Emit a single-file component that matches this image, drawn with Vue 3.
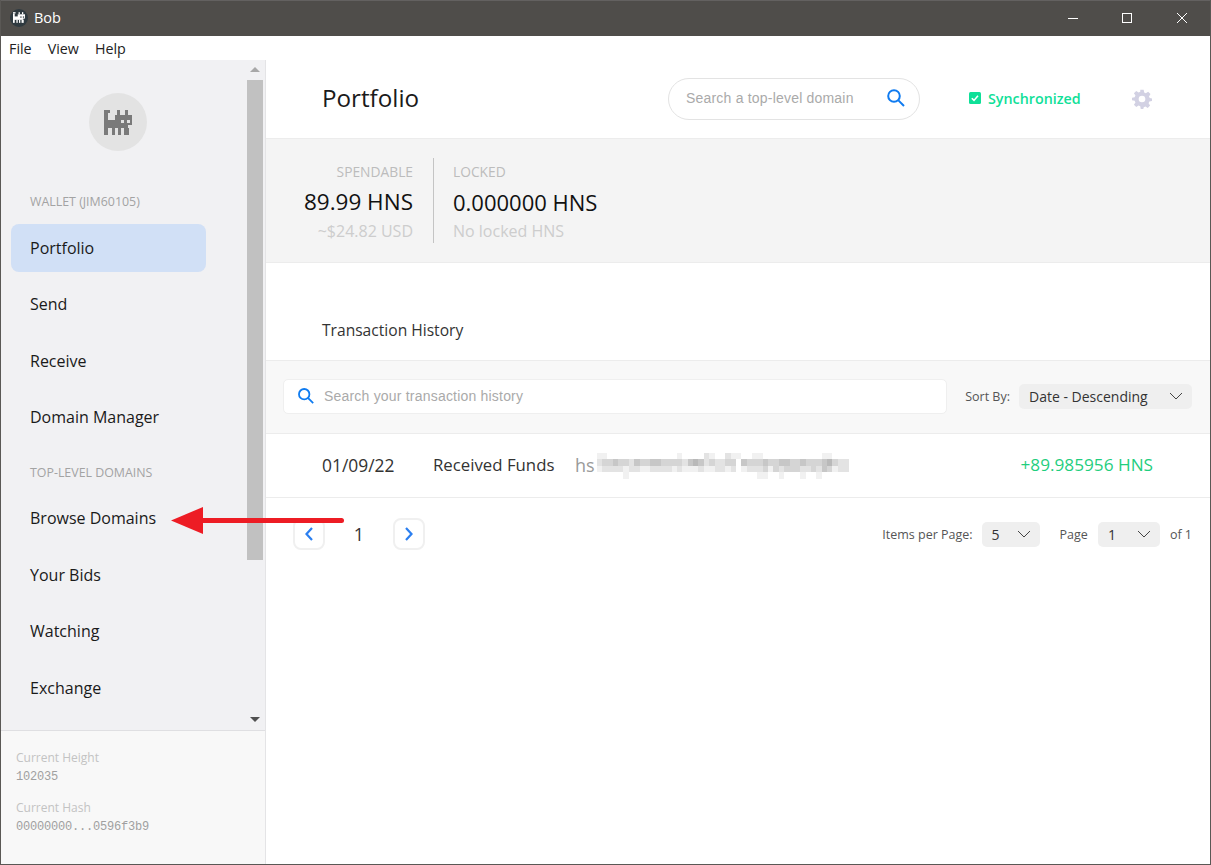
<template>
  <div class="window">
    <header class="titlebar">
      <span class="app-logo">
        <svg viewBox="0 0 28 25" width="12" height="11">
          <rect v-for="(r, i) in catRects" :key="i" :x="r[0]" :y="r[1]" :width="r[2]" :height="r[3]" fill="#fff" />
          <rect v-for="(r, i) in catEyes" :key="i" :x="r[0]" :y="r[1]" :width="r[2]" :height="r[3]" fill="#2f3a40" />
        </svg>
      </span>
      <span class="app-name">Bob</span>
      <div class="win-controls">
        <span class="win-btn">
          <svg width="12" height="12" viewBox="0 0 12 12"><path d="M1 6.500h10" stroke="#fff" fill="none" /></svg>
        </span>
        <span class="win-btn">
          <svg width="12" height="12" viewBox="0 0 12 12"><rect x="1.500" y="1.500" width="9" height="9" stroke="#fff" fill="none" /></svg>
        </span>
        <span class="win-btn">
          <svg width="12" height="12" viewBox="0 0 12 12"><path d="M1 1l10 10M11 1L1 11" stroke="#fff" fill="none" /></svg>
        </span>
      </div>
    </header>

    <nav class="menubar">
      <span>File</span>
      <span>View</span>
      <span>Help</span>
    </nav>

    <div class="body">
      <aside class="sidebar">
        <div class="side-scroll">
          <div class="side-nav">
            <div class="avatar">
              <svg viewBox="0 0 28 25" width="28" height="25">
                <rect v-for="(r, i) in catRects" :key="i" :x="r[0]" :y="r[1]" :width="r[2]" :height="r[3]" fill="#7a7a7a" />
                <rect v-for="(r, i) in catEyes" :key="i" :x="r[0]" :y="r[1]" :width="r[2]" :height="r[3]" fill="#e3e3e3" />
              </svg>
            </div>
            <div class="side-label wallet-label">WALLET (JIM60105)</div>
            <div class="side-item active">Portfolio</div>
            <div class="side-item">Send</div>
            <div class="side-item">Receive</div>
            <div class="side-item">Domain Manager</div>
            <div class="side-label domains-label">TOP-LEVEL DOMAINS</div>
            <div class="side-item">Browse Domains</div>
            <div class="side-item">Your Bids</div>
            <div class="side-item">Watching</div>
            <div class="side-item">Exchange</div>
          </div>
          <div class="scrollbar">
            <span class="arrow-up"></span>
            <span class="thumb"></span>
            <span class="arrow-down"></span>
          </div>
        </div>
        <div class="side-footer">
          <div class="foot-label">Current Height</div>
          <div class="foot-value">102035</div>
          <div class="foot-label second">Current Hash</div>
          <div class="foot-value">00000000...0596f3b9</div>
        </div>
      </aside>

      <main class="main">
        <div class="top-row">
          <h1 class="page-title">Portfolio</h1>
          <div class="domain-search">
            <span class="domain-placeholder">Search a top-level domain</span>
            <svg class="search-icon" width="20" height="20" viewBox="0 0 20 20">
              <circle cx="8" cy="8" r="5.800" fill="none" stroke="#0f7bf0" stroke-width="2" />
              <path d="M12.400 12.400l5.600 5.600" stroke="#0f7bf0" stroke-width="2" fill="none" />
            </svg>
          </div>
          <div class="sync">
            <svg width="12" height="12" viewBox="0 0 12 12">
              <rect width="12" height="12" rx="1.500" fill="#0fe098" />
              <path d="M2.800 6.200l2.200 2.200 4-4.600" stroke="#fff" stroke-width="1.600" fill="none" />
            </svg>
            <span>Synchronized</span>
          </div>
          <svg class="gear" width="20" height="22" viewBox="0 0 24 24">
            <path fill="#d2d1e3" fill-rule="evenodd" d="M10 1h4l.6 3.200 2 .9 2.800-1.800 2.800 2.800-1.800 2.800.9 2L24 11.500v3l-3.200.6-.9 2 1.800 2.800-2.800 2.800-2.800-1.800-2 .9L13.500 24h-3l-.6-3.200-2-.9-2.800 1.800-2.800-2.800 1.800-2.800-.9-2L0 13.500v-3l3.200-.6.900-2L2.300 5.100l2.800-2.800 2.800 1.800 2-.9zM12 8a4 4 0 1 0 0 8 4 4 0 0 0 0-8z" />
          </svg>
        </div>

        <section class="summary">
          <div class="bal spendable">
            <div class="bal-label">SPENDABLE</div>
            <div class="bal-amount">89.99 HNS</div>
            <div class="bal-note">~$24.82 USD</div>
          </div>
          <div class="bal locked">
            <div class="bal-label">LOCKED</div>
            <div class="bal-amount">0.000000 HNS</div>
            <div class="bal-note">No locked HNS</div>
          </div>
        </section>

        <h2 class="history-title">Transaction History</h2>

        <div class="filter-bar">
          <div class="history-search">
            <svg width="18" height="18" viewBox="0 0 20 20">
              <circle cx="8" cy="8" r="5.800" fill="none" stroke="#0f7bf0" stroke-width="2" />
              <path d="M12.400 12.400l5.600 5.600" stroke="#0f7bf0" stroke-width="2" fill="none" />
            </svg>
            <span>Search your transaction history</span>
          </div>
          <span class="small-label sort-label">Sort By:</span>
          <div class="select sort-select">
            <span>Date - Descending</span>
            <svg width="14" height="8" viewBox="0 0 14 8"><path d="M1 1l6 6 6-6" stroke="#444" fill="none" /></svg>
          </div>
        </div>

        <div class="tx-row">
          <span class="tx-date">01/09/22</span>
          <span class="tx-type">Received Funds</span>
          <span class="tx-hash">hs</span>
          <div class="blur">
            <div v-for="(row, y) in blurRows" :key="y" class="blur-row">
              <span v-for="(v, x) in row" :key="x" class="blur-cell" :style="{ background: shade(v) }"></span>
            </div>
          </div>
          <span class="tx-amount">+89.985956 HNS</span>
        </div>

        <div class="pager">
          <span class="page-btn">
            <svg width="10" height="16" viewBox="0 0 10 16"><path d="M8 2L2.500 8 8 14" stroke="#2b7ff0" stroke-width="2.200" fill="none" /></svg>
          </span>
          <span class="page-num">1</span>
          <span class="page-btn">
            <svg width="10" height="16" viewBox="0 0 10 16"><path d="M2 2l5.500 6L2 14" stroke="#2b7ff0" stroke-width="2.200" fill="none" /></svg>
          </span>
          <span class="small-label items-label">Items per Page:</span>
          <div class="select items-select">
            <span>5</span>
            <svg width="14" height="8" viewBox="0 0 14 8"><path d="M1 1l6 6 6-6" stroke="#444" fill="none" /></svg>
          </div>
          <span class="small-label page-label">Page</span>
          <div class="select page-select">
            <span>1</span>
            <svg width="14" height="8" viewBox="0 0 14 8"><path d="M1 1l6 6 6-6" stroke="#444" fill="none" /></svg>
          </div>
          <span class="small-label of-label">of 1</span>
        </div>
      </main>
    </div>

    <!-- annotation drawn on top of the screenshot -->
    <svg class="annotation" width="180" height="30" viewBox="0 0 180 30">
      <path d="M170.500 13.500H30" stroke="#ed1c24" stroke-width="5" stroke-linecap="round" fill="none" />
      <path d="M0 13.500L32 0v27z" fill="#ed1c24" />
    </svg>
  </div>
</template>

<script setup>
const catRects = [
  [0, 0, 6, 3],
  [0, 3, 4, 15],
  [13, 0, 3, 5],
  [21, 0, 3, 5],
  [11, 5, 17, 10],
  [0, 10, 24, 8],
  [0, 18, 4, 7],
  [8, 18, 3, 7],
  [14, 18, 3, 7],
  [20, 18, 5, 7]
]
const catEyes = [
  [17, 10, 3, 3],
  [23, 10, 3, 3]
]

// blurred address, one digit per mosaic block (0 = white, 9 = darkest)
const blurRows = [
  '11000000000000010000210021100110000000000011000',
  '23343324334433332454232233043334334433433345322',
  '12222122112222121112112212012223132333223243122',
  '00000100000000000000000000000011001000100100000'
]
const shade = (v) => {
  const g = 255 - Number(v) * 14
  return `rgb(${g},${g},${g})`
}
</script>

<style>
html,
body {
  margin: 0;
  background: #fff;
}
</style>

<style scoped>
.window {
  position: relative;
  width: 1211px;
  height: 865px;
  box-sizing: border-box;
  border: 1px solid #5a5855;
  border-top: none;
  display: flex;
  flex-direction: column;
  overflow: hidden;
  font-family: "Open Sans", "Noto Sans", sans-serif;
  color: #1c1c1c;
}

.titlebar {
  height: 36px;
  flex: none;
  margin: 0 -1px;
  background: #4f4d4a;
  border-top: 1px solid #636160;
  display: flex;
  align-items: center;
  padding: 0 0 2px 10px;
  color: #fff;
  box-sizing: border-box;
}
.app-logo {
  width: 18px;
  height: 18px;
  border-radius: 50%;
  background: #2f3a40;
  display: flex;
  align-items: center;
  justify-content: center;
}
.app-name {
  margin-left: 6px;
  font-size: 14.500px;
}
.win-controls {
  margin-left: auto;
  display: flex;
  margin-right: 2px;
}
.win-btn {
  width: 54.500px;
  height: 33px;
  display: flex;
  align-items: center;
  justify-content: center;
}

.menubar {
  height: 24px;
  flex: none;
  display: flex;
  align-items: center;
  gap: 16px;
  padding-left: 8px;
  font-size: 14.300px;
  color: #222;
  background: #fff;
}

.body {
  flex: 1;
  display: flex;
  min-height: 0;
}

.sidebar {
  width: 264px;
  flex: none;
  display: flex;
  flex-direction: column;
  border-right: 1px solid #e4e4e6;
  box-sizing: content-box;
}
.side-scroll {
  height: 670px;
  flex: none;
  display: flex;
  background: #f1f1f3;
  border-bottom: 1px solid #dfdfe2;
  overflow: hidden;
}
.side-nav {
  width: 246px;
  flex: none;
  padding: 33px 0 0;
  box-sizing: border-box;
}
.avatar {
  width: 58px;
  height: 58px;
  border-radius: 50%;
  background: #e3e3e3;
  margin-left: 88px;
  display: flex;
  align-items: center;
  justify-content: center;
}
.side-label {
  font-size: 12.400px;
  color: #a3a3a3;
  padding-left: 29px;
  line-height: 16px;
}
.wallet-label {
  margin-top: 43px;
  margin-bottom: 14px;
}
.domains-label {
  margin-top: 24px;
  margin-bottom: 13.200px;
}
.side-item {
  height: 48px;
  margin: 0 41px 8.400px 10px;
  padding-left: 19px;
  display: flex;
  align-items: center;
  font-size: 16px;
  border-radius: 8px;
  color: #1a1a1a;
}
.side-item.active {
  background: #d1e0f6;
}
.scrollbar {
  width: 16px;
  flex: none;
  display: flex;
  flex-direction: column;
  align-items: center;
  padding-top: 7px;
}
.arrow-up {
  width: 0;
  height: 0;
  border-left: 5px solid transparent;
  border-right: 5px solid transparent;
  border-bottom: 5px solid #a8a8a8;
}
.thumb {
  width: 16px;
  height: 480px;
  background: #c1c1c1;
  margin-top: 8px;
}
.arrow-down {
  width: 0;
  height: 0;
  margin-top: 157px;
  border-left: 5px solid transparent;
  border-right: 5px solid transparent;
  border-top: 5px solid #505050;
}
.side-footer {
  flex: 1;
  background: #f8f8f8;
  padding: 19px 15px 0;
}
.foot-label {
  font-size: 12px;
  line-height: 16px;
  color: #c3c3c3;
}
.foot-label.second {
  margin-top: 15px;
}
.foot-value {
  margin-top: 3px;
  font-family: "Liberation Mono", monospace;
  font-size: 12px;
  letter-spacing: -0.200px;
  line-height: 16px;
  color: #a0a0a0;
}

.main {
  flex: 1;
  min-width: 0;
  display: flex;
  flex-direction: column;
}
.top-row {
  height: 79px;
  flex: none;
  display: flex;
  align-items: center;
  padding-left: 56px;
  box-sizing: border-box;
  border-bottom: 1px solid #ececec;
}
.page-title {
  margin: 0 0 4px;
  width: 346px;
  font-size: 24.200px;
  font-weight: 400;
  color: #1a1a1a;
}
.domain-search {
  width: 252px;
  height: 42px;
  box-sizing: border-box;
  border: 1px solid #e3e3e3;
  border-radius: 21px;
  display: flex;
  align-items: center;
  justify-content: space-between;
  padding: 0 13px 2px 17px;
}
.domain-placeholder {
  font-family: "Liberation Sans", sans-serif;
  font-size: 14px;
  letter-spacing: 0.200px;
  color: #aaa;
}
.sync {
  margin: 0 0 2px 49px;
  display: flex;
  align-items: center;
  gap: 7px;
  width: 163px;
  font-size: 14.300px;
  font-weight: 600;
  color: #0fe098;
}
.gear {
  display: block;
}

.summary {
  height: 123px;
  flex: none;
  background: #f4f4f4;
  display: flex;
  padding-top: 19px;
  box-sizing: border-box;
  align-items: flex-start;
}
.bal {
  height: 85px;
  box-sizing: border-box;
}
.spendable {
  width: 168px;
  padding-right: 20px;
  text-align: right;
  border-right: 1px solid #c4c4c4;
}
.locked {
  padding-left: 19px;
}
.locked .bal-amount {
  font-size: 22px;
}
.bal-label {
  font-size: 13.800px;
  line-height: 16px;
  margin-top: 6px;
  color: #bcbcbc;
}
.bal-amount {
  font-size: 22.500px;
  line-height: 30px;
  margin-top: 7px;
  color: #111;
}
.bal-note {
  font-size: 16px;
  line-height: 22px;
  margin-top: 3px;
  color: #cdcdcd;
}

.history-title {
  height: 99px;
  flex: none;
  margin: 0;
  padding: 56px 0 0 56px;
  box-sizing: border-box;
  font-size: 15.600px;
  line-height: 22px;
  font-weight: 400;
  color: #333;
  border-top: 1px solid #ececec;
  border-bottom: 1px solid #ececec;
}
.filter-bar {
  height: 73px;
  flex: none;
  box-sizing: border-box;
  background: #f8f8f8;
  border-bottom: 1px solid #ececec;
  display: flex;
  align-items: center;
  padding: 0 18px 2px 17px;
}
.history-search {
  flex: 1;
  height: 35px;
  background: #fff;
  border: 1px solid #efefef;
  border-radius: 5px;
  box-sizing: border-box;
  display: flex;
  align-items: center;
  gap: 9px;
  padding: 0 0 0 13px;
  font-family: "Liberation Sans", sans-serif;
  font-size: 14px;
  letter-spacing: 0.200px;
  color: #aaa;
}
.small-label {
  font-size: 12.500px;
  color: #555;
}
.sort-label {
  margin-left: 18px;
  margin-right: 9px;
}
.select {
  height: 25px;
  background: #efefef;
  border-radius: 5px;
  display: flex;
  align-items: center;
  justify-content: space-between;
  box-sizing: border-box;
  padding: 0 9px 0 10px;
  font-size: 14px;
  color: #333;
}
.sort-select {
  width: 173px;
}

.tx-row {
  height: 64px;
  flex: none;
  box-sizing: border-box;
  border-bottom: 1px solid #ececec;
  display: flex;
  align-items: center;
  padding: 0 57px 2px 56px;
  font-size: 16.800px;
  color: #333;
}
.tx-date {
  width: 111px;
  font-size: 17.400px;
}
.tx-type {
  width: 142px;
}
.tx-hash {
  font-size: 18px;
  color: #9a9a9a;
}
.blur {
  margin: 2px 0 0 2px;
  display: flex;
  flex-direction: column;
}
.blur-row {
  display: flex;
  height: 6.500px;
}
.blur-cell {
  width: 5.370px;
  height: 100%;
}
.tx-amount {
  margin-left: auto;
  font-size: 17.200px;
  color: #1fce7e;
}

.pager {
  display: flex;
  align-items: center;
  padding: 20px 18px 0 27px;
}
.page-btn {
  width: 32px;
  height: 32px;
  box-sizing: border-box;
  border: 2px solid #f0f0f0;
  border-radius: 8px;
  display: flex;
  align-items: center;
  justify-content: center;
}
.page-num {
  width: 68px;
  text-align: center;
  font-size: 18px;
  color: #333;
}
.items-label {
  margin-left: auto;
  margin-right: 9px;
}
.items-select {
  width: 58px;
}
.page-label {
  margin: 0 10px 0 20px;
}
.page-select {
  width: 62px;
}
.of-label {
  margin-left: 10px;
}

.annotation {
  position: absolute;
  left: 170px;
  top: 507px;
}
</style>
